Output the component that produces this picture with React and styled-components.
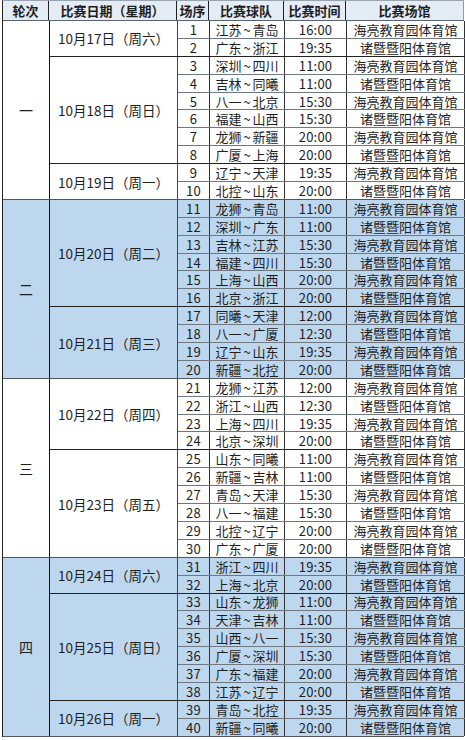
import styled, { createGlobalStyle } from "styled-components";

const H = "海亮教育园体育馆";
const Z = "诸暨暨阳体育馆";

const rounds = [
  {
    name: "一",
    blue: false,
    days: [
      { date: "10月17日（周六）", games: [[1, "江苏~青岛", "16:00", H], [2, "广东~浙江", "19:35", Z]] },
      {
        date: "10月18日（周日）",
        games: [
          [3, "深圳~四川", "11:00", H],
          [4, "吉林~同曦", "11:00", Z],
          [5, "八一~北京", "15:30", H],
          [6, "福建~山西", "15:30", Z],
          [7, "龙狮~新疆", "20:00", H],
          [8, "广厦~上海", "20:00", Z],
        ],
      },
      { date: "10月19日（周一）", games: [[9, "辽宁~天津", "19:35", H], [10, "北控~山东", "20:00", Z]] },
    ],
  },
  {
    name: "二",
    blue: true,
    days: [
      {
        date: "10月20日（周二）",
        games: [
          [11, "龙狮~青岛", "11:00", H],
          [12, "深圳~广东", "11:00", Z],
          [13, "吉林~江苏", "15:30", H],
          [14, "福建~四川", "15:30", Z],
          [15, "上海~山西", "20:00", H],
          [16, "北京~浙江", "20:00", Z],
        ],
      },
      {
        date: "10月21日（周三）",
        games: [
          [17, "同曦~天津", "12:00", H],
          [18, "八一~广厦", "12:30", Z],
          [19, "辽宁~山东", "19:35", H],
          [20, "新疆~北控", "20:00", Z],
        ],
      },
    ],
  },
  {
    name: "三",
    blue: false,
    days: [
      {
        date: "10月22日（周四）",
        games: [
          [21, "龙狮~江苏", "12:00", H],
          [22, "浙江~山西", "12:30", Z],
          [23, "上海~四川", "19:35", H],
          [24, "北京~深圳", "20:00", Z],
        ],
      },
      {
        date: "10月23日（周五）",
        games: [
          [25, "山东~同曦", "11:00", H],
          [26, "新疆~吉林", "11:00", Z],
          [27, "青岛~天津", "15:30", H],
          [28, "八一~福建", "15:30", Z],
          [29, "北控~辽宁", "20:00", H],
          [30, "广东~广厦", "20:00", Z],
        ],
      },
    ],
  },
  {
    name: "四",
    blue: true,
    days: [
      { date: "10月24日（周六）", games: [[31, "浙江~四川", "19:35", H], [32, "上海~北京", "20:00", Z]] },
      {
        date: "10月25日（周日）",
        games: [
          [33, "山东~龙狮", "11:00", H],
          [34, "天津~吉林", "11:00", Z],
          [35, "山西~八一", "15:30", H],
          [36, "广厦~深圳", "15:30", Z],
          [37, "广东~福建", "20:00", H],
          [38, "江苏~辽宁", "20:00", Z],
        ],
      },
      { date: "10月26日（周一）", games: [[39, "青岛~北控", "19:35", H], [40, "新疆~同曦", "20:00", Z]] },
    ],
  },
];

function Teams({ value }) {
  const [a, b] = value.split("~");
  return (
    <TeamCell>
      {a}
      <Tilde>~</Tilde>
      {b}
    </TeamCell>
  );
}

function App() {
  return (
    <>
      <GlobalStyle />
      <Table>
        <HeaderRow>
          <HeadCell>轮次</HeadCell>
          <HeadCell>比赛日期（星期）</HeadCell>
          <HeadCell>场序</HeadCell>
          <HeadCell>比赛球队</HeadCell>
          <HeadCell>比赛时间</HeadCell>
          <HeadCell>比赛场馆</HeadCell>
        </HeaderRow>
        {rounds.map((r) => (
          <Round key={r.name} $blue={r.blue}>
            <RoundCell>{r.name}</RoundCell>
            <Days>
              {r.days.map((d) => (
                <Day key={d.date}>
                  <DateCell>{d.date}</DateCell>
                  <Games>
                    {d.games.map(([no, teams, time, venue]) => (
                      <GameRow key={no}>
                        <NumCell>{no}</NumCell>
                        <Teams value={teams} />
                        <NumCell>{time}</NumCell>
                        <Cell>{venue}</Cell>
                      </GameRow>
                    ))}
                  </Games>
                </Day>
              ))}
            </Days>
          </Round>
        ))}
      </Table>
    </>
  );
}

const GlobalStyle = createGlobalStyle`
  body {
    margin: 0;
    background: #fff;
    font-family: "Noto Sans CJK SC", "Microsoft YaHei", sans-serif;
    color: #1e1e1e;
  }
`;

const Table = styled.div`
  width: 461px;
  margin-left: 2px;
  border-left: 1px solid #222;
  border-top: 1px solid #9aa4b0;
  font-size: 13px;
`;

const HeaderRow = styled.div`
  display: grid;
  grid-template-columns: 46px 128px 32px 75px 62px 118px;
  height: 19px;
  background: #e4ecf5;
  border-bottom: 1px solid #5a6470;
`;

const HeadCell = styled.div`
  display: flex;
  align-items: center;
  justify-content: center;
  font-weight: 700;
  border-right: 1px solid #222;
  line-height: 15px;
  &:last-child {
    border-right: 1px solid #999;
  }
`;

const Round = styled.div`
  display: flex;
  background: ${(p) => (p.$blue ? "#bdd7ee" : "#fff")};
  border-bottom: 1px solid #4f5963;
`;

const RoundCell = styled.div`
  width: 46px;
  flex: none;
  display: flex;
  align-items: center;
  justify-content: center;
  border-right: 1px solid #111;
  font-size: 14px;
`;

const Days = styled.div`
  flex: 1;
  display: flex;
  flex-direction: column;
`;

const Day = styled.div`
  display: flex;
  border-bottom: 1px solid #222;
  &:last-child {
    border-bottom: none;
  }
`;

const DateCell = styled.div`
  width: 127px;
  flex: none;
  display: flex;
  align-items: center;
  justify-content: center;
  border-right: 1px solid #444;
  font-size: 13.5px;
`;

const Games = styled.div`
  flex: 1;
  display: flex;
  flex-direction: column;
`;

const GameRow = styled.div`
  display: grid;
  grid-template-columns: 32px 75px 62px 118px;
  height: 17.9px;
  box-sizing: border-box;
  border-bottom: 1px solid #6f7780;
  &:last-child {
    border-bottom: none;
    height: 16.9px;
  }
`;

const Cell = styled.div`
  display: flex;
  align-items: center;
  justify-content: center;
  line-height: 15px;
  font-size: 13px;
  border-right: 1px solid #333;
  white-space: nowrap;
`;

const NumCell = styled(Cell)`
  font-size: 13px;
  letter-spacing: 0.2px;
`;

const TeamCell = styled(Cell)`
  gap: 1px;
`;

const Tilde = styled.span`
  padding: 0 1px;
`;

export default App;
